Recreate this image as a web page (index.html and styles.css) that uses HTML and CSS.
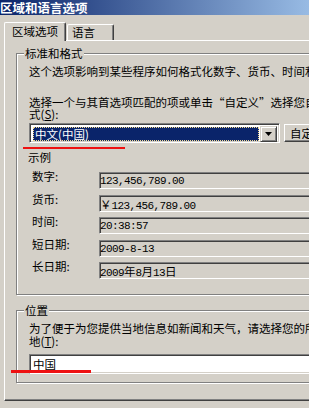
FILE: index.html
```html
<!DOCTYPE html>
<html lang="zh-CN">
<head>
    <meta charset="UTF-8">
    <meta name="viewport" content="width=device-width, initial-scale=1.0">
    <title>区域和语言选项</title>
    <link rel="stylesheet" href="styles.css">
</head>
<body>
    <div class="titlebar">区域和语言选项</div>

    <div class="tabs">
        <div class="tab active">区域选项</div>
        <div class="tab">语言</div>
    </div>

    <div class="panel">
        <div class="group group-format">
            <span class="legend">标准和格式</span>
            <p class="desc">这个选项影响到某些程序如何格式化数字、货币、时间和日期。</p>
            <p class="desc desc-pick">选择一个与其首选项匹配的项或单击“自定义”选择您自己的格<br>式(<u>S</u>):</p>

            <div class="combo-row">
                <div class="combo">
                    <div class="combo-value"><span>中文(中国)</span></div>
                    <div class="combo-arrow">
                        <svg width="7" height="4" viewBox="0 0 7 4"><polygon points="0,0 7,0 3.5,4" fill="#000"/></svg>
                    </div>
                </div>
                <button class="btn">自定义(<u>Z</u>)...</button>
            </div>
            <div class="mark"></div>

            <div class="sample-title">示例</div>
            <div class="samples">
                <div class="sample-label">数字:</div>
                <div class="field">123,456,789.00</div>
                <div class="sample-label">货币:</div>
                <div class="field"><span class="cj">￥</span>123,456,789.00</div>
                <div class="sample-label">时间:</div>
                <div class="field">20:38:57</div>
                <div class="sample-label">短日期:</div>
                <div class="field">2009-8-13</div>
                <div class="sample-label">长日期:</div>
                <div class="field">2009<span class="cj">年</span>8<span class="cj">月</span>13<span class="cj">日</span></div>
            </div>
        </div>

        <div class="group group-location">
            <span class="legend">位置</span>
            <p class="desc desc-loc">为了便于为您提供当地信息如新闻和天气，请选择您的所在<br>地(<u>T</u>):</p>
            <div class="edit">
                中国
                <div class="mark mark-edit"></div>
            </div>
        </div>
    </div>
</body>
</html>
```

FILE: styles.css
```css
* {
    box-sizing: border-box;
}
body {
    margin: 0;
    width: 309px;
    height: 408px;
    overflow: hidden;
    background-color: #D4D0C8;
    color: #000;
    font-family: "Noto Sans CJK SC", sans-serif;
    font-size: 11.5px;
    line-height: 12px;
}
.titlebar {
    width: 340px;
    height: 15px;
    background: linear-gradient(to right, #0A246A, #A6CAF0);
    color: #fff;
    font-weight: bold;
    font-size: 12.5px;
    line-height: 15px;
    white-space: nowrap;
}
.tabs {
    display: flex;
    align-items: flex-end;
    height: 18px;
    margin: 7px 0 0 4px;
}
.tab {
    height: 16px;
    padding: 0 18px 0 4px;
    margin-left: 1px;
    border: 1px solid #fff;
    border-right-color: #404040;
    border-bottom: none;
    border-radius: 2px 2px 0 0;
    box-shadow: inset -1px 0 #808080;
    line-height: 15px;
    white-space: nowrap;
}
.tab.active {
    position: relative; /* fica por cima da borda do painel */
    z-index: 1;
    height: 19px;
    margin: 0 0 -1px 0;
    padding: 0 7px 0 7px;
    background-color: #D4D0C8;
    line-height: 16px;
}
.panel {
    width: 400px;
    height: 361px;
    margin-left: 4px;
    padding: 12px 0 0 11px;
    border: 1px solid #fff;
    border-right-color: #404040;
    border-bottom-color: #404040;
    box-shadow: inset -1px -1px #808080;
}
.group {
    position: relative;
    margin-right: 20px;
    padding-left: 12px;
    border: 1px solid #808080;
    box-shadow: inset 1px 1px #fff, 1px 1px #fff;
}
.group-format {
    height: 242px;
    padding-top: 11px;
}
.group-location {
    height: 73px;
    margin-top: 15px;
    padding-top: 11px;
}
.legend {
    position: absolute;
    top: -7px;
    left: 7px;
    padding: 0 1px;
    background-color: #D4D0C8;
    white-space: nowrap;
}
.desc {
    margin: 0;
    white-space: nowrap;
}
.desc-pick {
    margin-top: 19px;
}
.desc-loc {
    line-height: 13px;
}
u {
    text-decoration: underline;
    text-underline-offset: 1px;
}
.combo-row {
    display: flex;
    align-items: center;
    margin-top: 3px;
}
.combo {
    display: flex;
    width: 251px;
    height: 20px;
    padding: 1px;
    border: 1px solid #808080;
    border-right-color: #fff;
    border-bottom-color: #fff;
    background-color: #fff;
    box-shadow: inset 1px 1px #404040, inset -1px -1px #D4D0C8;
}
.combo-value {
    flex: 1;
    margin: 2px 0 0 2px;
    padding-left: 1px;
    background-color: #0A246A;
    border: 1px dotted #F2D98F;
    color: #fff;
    line-height: 12px;
    white-space: nowrap;
}
.combo-arrow {
    display: flex;
    align-items: center;
    justify-content: center;
    width: 17px;
    height: 16px;
    margin: 1px 1px 0 1px;
    background-color: #D4D0C8;
    border: 1px solid #D4D0C8;
    border-right-color: #404040;
    border-bottom-color: #404040;
    box-shadow: inset 1px 1px #fff, inset -1px -1px #808080;
}
.btn {
    width: 80px;
    height: 18px;
    margin-left: 4px;
    padding: 0 0 0 5px;
    text-align: left;
    font-family: inherit;
    font-size: inherit;
    line-height: 14px;
    color: #000;
    background-color: #D4D0C8;
    border: 1px solid #fff;
    border-right-color: #404040;
    border-bottom-color: #404040;
    box-shadow: inset -1px -1px #808080;
    white-space: nowrap;
}
.mark {
    width: 102px;
    height: 2px;
    margin: 4px 0 0 -6px;
    background-color: #EE1111;
}
.sample-title {
    margin: 2px 0 0 -1px;
}
.samples {
    display: grid;
    grid-template-columns: 70px 1fr;
    grid-auto-rows: 17px;
    row-gap: 5.5px;
    margin-top: 9px;
}
.sample-label {
    margin-top: -2px;
    padding-left: 3px;
    white-space: nowrap;
}
.field {
    height: 17px;
    border: 1px solid #808080;
    border-right-color: #fff;
    border-bottom-color: #fff;
    box-shadow: inset 1px 1px #404040;
    font-family: "Liberation Mono", monospace;
    font-size: 11px;
    letter-spacing: -0.6px;
    line-height: 16px;
    white-space: nowrap;
}
.field .cj {
    font-family: "Noto Sans CJK SC", sans-serif;
    font-size: 11.5px;
    letter-spacing: 0;
}
.edit {
    position: relative;
    height: 20px;
    margin-top: 6px;
    padding: 2px 0 0 3px;
    border: 1px solid #808080;
    border-right-color: #fff;
    border-bottom-color: #fff;
    background-color: #fff;
    box-shadow: inset 1px 1px #404040, inset -1px -1px #D4D0C8;
    line-height: 14px;
}
.mark-edit {
    position: absolute;
    top: 15px;
    left: -19px;
    width: 80px;
    height: 3px;
    margin: 0;
}
```
